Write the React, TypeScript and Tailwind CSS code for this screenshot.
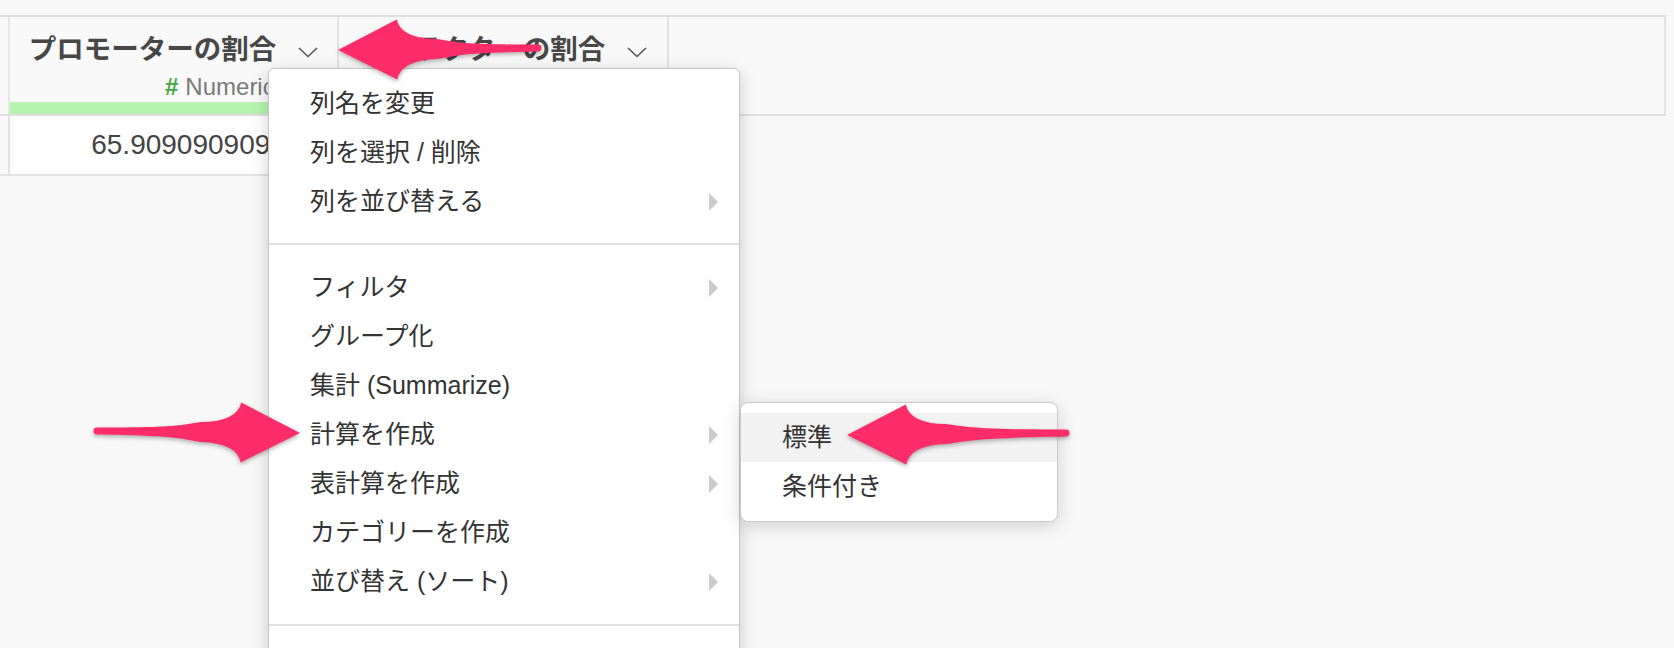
import React from 'react';

const font = "font-['Liberation_Sans','Noto_Sans_CJK_JP',sans-serif]";

type Point = [number, number];

// skitch-style annotation arrow, drawn pointing along from -> to
const Arrow: React.FC<{ from: Point; to: Point }> = ({ from, to }) => {
  const dx = to[0] - from[0];
  const dy = to[1] - from[1];
  const L = Math.hypot(dx, dy);
  const deg = (Math.atan2(dy, dx) * 180) / Math.PI;
  const h = 59;
  const w = 30;
  const t = 3.5;
  const s = 10;
  const b = L - h;
  const d = `M0 ${-t} C${L * 0.4} ${-t - 0.5} ${b - 60} ${-s + 3} ${b - 40} ${-s} Q${b - 4} ${-s - 1} ${b} ${-w} L${L} 0 L${b} ${w} Q${b - 4} ${s + 1} ${b - 40} ${s} C${b - 60} ${s - 3} ${L * 0.4} ${t + 0.5} 0 ${t} A${t} ${t} 0 0 1 0 ${-t} Z`;
  return (
    <g transform={`translate(${from[0]} ${from[1]}) rotate(${deg})`}>
      <path d={d} fill="#fe2c68" />
    </g>
  );
};

const Chevron = () => (
  <svg width="20" height="11" viewBox="0 0 20 11" className="mt-[4px]">
    <polyline points="1,1 10,9.5 19,1" fill="none" stroke="#555" strokeWidth="1.6" />
  </svg>
);

const SubArrow = () => (
  <svg width="9" height="18" viewBox="0 0 9 18">
    <polygon points="0,0 9,9 0,18" fill="#cbcbcb" />
  </svg>
);

const HeaderCell: React.FC<{ title: string; width: string; type?: boolean }> = ({ title, width, type }) => (
  <div className={`flex flex-col ${width} border-r-2 border-[#e2e2e2]`}>
    <div className="flex items-center justify-center gap-[22px] pt-[19px] h-[47px]">
      <span className="text-[27.5px] leading-[28px] font-bold text-[#474747]">{title}</span>
      <Chevron />
    </div>
    {type && (
      <div className="ml-[155px] mt-[11px] flex items-center gap-[7px] text-[24px] leading-[24px]">
        <span className="font-bold text-[#43a843]">#</span>
        <span className="text-[#7a7a7a]">Numeric</span>
      </div>
    )}
    <div className="mt-auto h-[12px] bg-[#b5f4ae]" />
  </div>
);

const MenuItem: React.FC<{ label: string; sub?: boolean }> = ({ label, sub }) => (
  <div className="flex items-center justify-between h-[49px] pl-[41px] pr-[21px] text-[25px] text-[#333]">
    <span>{label}</span>
    {sub && <SubArrow />}
  </div>
);

export default function App() {
  return (
    <div className={`relative w-[1674px] h-[648px] overflow-hidden bg-[#f8f8f8] ${font}`}>
      <div className="pt-[15px]">
        <div className="w-[1666px] border-t-2 border-[#dedede]">
          <div className="flex h-[97px] bg-[#f9f9f9]">
            <div className="w-[10px] border-r-2 border-[#e6e6e6]" />
            <HeaderCell title="プロモーターの割合" width="w-[329px]" type />
            <HeaderCell title="デトラクターの割合" width="w-[330px]" />
            <div className="flex-1 border-r-2 border-[#e2e2e2]" />
          </div>
          <div className="h-[2px] bg-[#dedede]" />
          <div className="flex h-[60px]">
            <div className="w-[10px] border-r-2 border-b-2 border-[#e3e3e3] bg-[#f9f9f9]" />
            <div className="w-[329px] flex items-center justify-end pr-[20px] bg-white border-r-2 border-b-2 border-[#e3e3e3] text-[28px] text-[#444]">
              65.909090909091
            </div>
            <div className="w-[330px] bg-white border-r-2 border-b-2 border-[#e3e3e3]" />
          </div>
        </div>
      </div>

      <div className="absolute left-[268px] top-[68px] w-[472px] bg-white border border-[#c6c6c6] rounded-[6px] shadow-[0_4px_18px_rgba(0,0,0,0.18)] pt-[10px]">
        <MenuItem label="列名を変更" />
        <MenuItem label="列を選択 / 削除" />
        <MenuItem label="列を並び替える" sub />
        <div className="mt-[17px] mb-[18px] h-[2px] bg-[#e1e1e1]" />
        <MenuItem label="フィルタ" sub />
        <MenuItem label="グループ化" />
        <MenuItem label="集計 (Summarize)" />
        <MenuItem label="計算を作成" sub />
        <MenuItem label="表計算を作成" sub />
        <MenuItem label="カテゴリーを作成" />
        <MenuItem label="並び替え (ソート)" sub />
        <div className="my-[18px] h-[2px] bg-[#e1e1e1]" />
        <div className="h-[49px]" />
      </div>

      <div className="absolute left-[740px] top-[402px] w-[318px] bg-white border border-[#c9c9c9] rounded-[8px] shadow-[0_4px_18px_rgba(0,0,0,0.16)] py-[10px] overflow-hidden">
        <div className="flex items-center h-[49px] pl-[41px] bg-[#f2f2f2] text-[25px] text-[#333]">標準</div>
        <div className="flex items-center h-[49px] pl-[41px] text-[25px] text-[#333]">条件付き</div>
      </div>

      <svg
        width="1674"
        height="648"
        className="absolute inset-0 pointer-events-none drop-shadow-[0_2px_2px_rgba(0,0,0,0.3)]"
      >
        <Arrow from={[538, 48]} to={[338, 50]} />
        <Arrow from={[97, 431]} to={[300, 433]} />
        <Arrow from={[1066, 433]} to={[847, 435]} />
      </svg>
    </div>
  );
}
